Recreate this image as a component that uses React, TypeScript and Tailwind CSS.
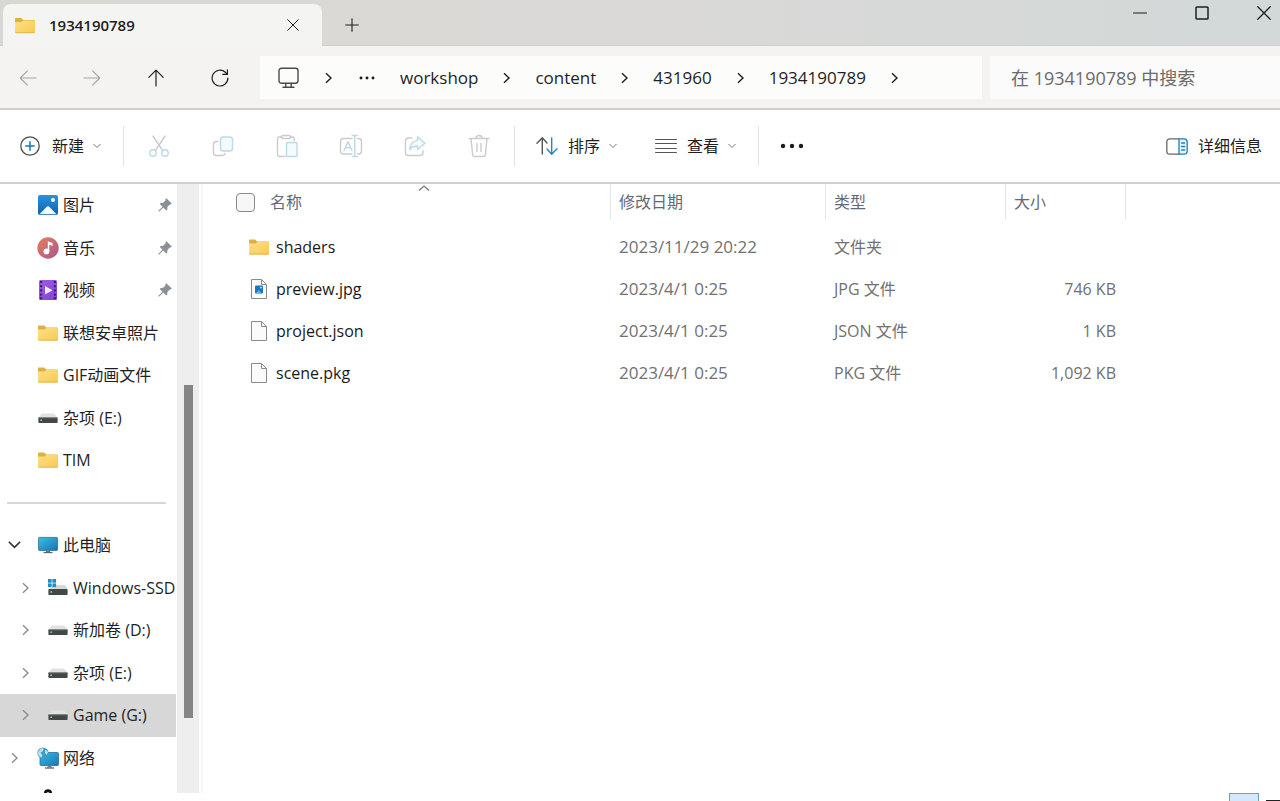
import React from "react";

type IconProps = { className?: string };

const Folder = ({ className = "w-5 h-4" }: IconProps) => (
  <svg viewBox="0 0 20 16" className={`shrink-0 ${className}`}>
    <defs>
      <linearGradient id="folderFront" x1="0" y1="0" x2="1" y2="1">
        <stop offset="0" stopColor="#fde08a" />
        <stop offset="1" stopColor="#f8c94f" />
      </linearGradient>
    </defs>
    <path d="M0 1.6Q0 .5 1 .5H6.2L8.2 2.4H19Q20 2.4 20 3.4V6H0Z" fill="#dfb040" />
    <path d="M0 4.4H6.6L8.4 3H19.2Q20 3 20 3.8V14.6Q20 15.5 19 15.5H1Q0 15.5 0 14.6Z" fill="url(#folderFront)" />
    <path d="M.4 15.2H19.6" stroke="#dca83a" strokeWidth=".7" />
  </svg>
);

const Pictures = () => (
  <svg viewBox="0 0 20 20" className="w-5 h-5 shrink-0">
    <defs>
      <linearGradient id="pic" x1="0" y1="0" x2="0" y2="1">
        <stop offset="0" stopColor="#2b93dc" />
        <stop offset="1" stopColor="#0d62b5" />
      </linearGradient>
    </defs>
    <rect x="0" y="0" width="20" height="20" rx="2" fill="url(#pic)" />
    <path d="M1.5 19.3L9 11.6Q10 10.7 11 11.6L18.5 19.3Z" fill="#f4fbff" />
    <circle cx="15" cy="5" r="2" fill="#fff" />
  </svg>
);

const Music = () => (
  <svg viewBox="0 0 22 22" className="-mx-px w-[22px] h-[22px] shrink-0">
    <defs>
      <linearGradient id="mus" x1="0" y1="0" x2="1" y2="1">
        <stop offset="0" stopColor="#e5805c" />
        <stop offset="1" stopColor="#a9568f" />
      </linearGradient>
    </defs>
    <circle cx="11" cy="11" r="10.7" fill="url(#mus)" />
    <circle cx="9.4" cy="14.4" r="2.9" fill="#fff" />
    <path d="M10.8 14.4V4.2L15.6 6V9L12.3 7.8V14.4Z" fill="#fff" />
  </svg>
);

const Video = () => (
  <svg viewBox="0 0 20 22" className="w-5 h-[22px] shrink-0">
    <defs>
      <linearGradient id="vid" x1="0" y1="0" x2="1" y2="1">
        <stop offset="0" stopColor="#a45be6" />
        <stop offset="1" stopColor="#7a45d0" />
      </linearGradient>
    </defs>
    <rect x="1" y="1" width="18" height="20" rx="1.5" fill="url(#vid)" />
    <g fill="#3c1c76">
      {[2, 6.2, 10.4, 14.6, 18.2].map((y) => (
        <React.Fragment key={y}>
          <rect x="2" y={y} width="2.2" height="2" />
          <rect x="15.8" y={y} width="2.2" height="2" />
        </React.Fragment>
      ))}
    </g>
    <path d="M7 7L14.5 11.2L7 15.4Z" fill="#f3e9ff" />
  </svg>
);

const Drive = () => (
  <svg viewBox="0 0 20 14" className="w-5 h-[14px] shrink-0">
    <path d="M4 2.4H16L19.6 6.6H.4Z" fill="#e0e1e1" />
    <rect x=".4" y="6.4" width="19.2" height="5.6" rx=".8" fill="#434745" />
    <path d="M.4 6.8H19.6" stroke="#777a79" strokeWidth=".8" />
    <circle cx="3.2" cy="9.2" r=".9" fill="#7fd6a4" />
  </svg>
);

const SystemDrive = () => (
  <svg viewBox="0 0 20 18" className="w-5 h-[18px] shrink-0">
    <path d="M8 6H17L19.6 10H1Z" fill="#d6d8d9" />
    <rect x=".4" y="10" width="19.2" height="6" rx=".8" fill="#434745" />
    <circle cx="3.2" cy="13" r=".9" fill="#7fd6a4" />
    <g fill="#1e8fc4">
      <rect x="0" y="0" width="3.7" height="3.7" />
      <rect x="4.4" y="0" width="3.7" height="3.7" />
      <rect x="0" y="4.4" width="3.7" height="3.7" />
      <rect x="4.4" y="4.4" width="3.7" height="3.7" />
    </g>
  </svg>
);

const Computer = () => (
  <svg viewBox="0 0 20 18" className="w-5 h-[18px] shrink-0">
    <defs>
      <linearGradient id="pc" x1="0" y1="0" x2="1" y2="1">
        <stop offset="0" stopColor="#35bfe0" />
        <stop offset="1" stopColor="#1a74b8" />
      </linearGradient>
    </defs>
    <rect x=".4" y="1.4" width="19.2" height="13" rx="1" fill="url(#pc)" stroke="#39677f" strokeWidth=".8" />
    <path d="M8 14.6H12V16H8Z" fill="#6f8088" />
    <path d="M5.5 16.5H14.5" stroke="#56666f" strokeWidth="1.3" />
  </svg>
);

const Network = () => (
  <svg viewBox="0 0 22 22" className="-mx-px w-[22px] h-[22px] shrink-0">
    <rect x="3" y="5.5" width="18.5" height="13" rx="1" fill="url(#pc)" stroke="#2b6d92" strokeWidth=".8" />
    <path d="M10.5 18.5H14.5V20.5H10.5Z" fill="#6f8088" />
    <path d="M8 21H17" stroke="#56666f" strokeWidth="1.3" />
    <circle cx="6" cy="6" r="5.6" fill="#3d9cc9" />
    <path d="M1.6 4Q4 .6 6.6 1.2L6 4L3.6 5.6L5.4 8L4.6 10.6Q1 9 1 6Z" fill="#b9e3ee" />
    <path d="M8.6 2.4L11 5L9.4 8L8 5.4Z" fill="#c9ebf2" />
  </svg>
);

const Pin = () => (
  <svg viewBox="0 0 14 14" className="w-[14px] h-[14px] shrink-0" fill="#8b9096">
    <path d="M8.3 .2L13.8 5.5L12.8 6.6L11.8 6.4L9.4 9L9.3 11.5L8.2 12.4L5.3 9.5L.9 13.7L.2 13L4.5 8.7L1.8 6L2.7 5L5.2 4.8L7.6 2.3L7.3 1.2Z" />
  </svg>
);

const Chevron = ({ className = "" }: IconProps) => (
  <svg viewBox="0 0 7 12" className={`w-[7px] h-3 shrink-0 ${className}`} fill="none" stroke="currentColor" strokeWidth="1.4">
    <path d="M1 1.2L6 6L1 10.8" />
  </svg>
);

const Down = ({ className = "w-2 h-[6px] text-[#777]" }: IconProps) => (
  <svg viewBox="0 0 8 6" className={`shrink-0 ${className}`} fill="none" stroke="currentColor" strokeWidth="1">
    <path d="M.5 1L4 4.5L7.5 1" />
  </svg>
);

const Dots = ({ className = "" }: IconProps) => (
  <svg viewBox="0 0 24 6" className={`shrink-0 ${className}`} fill="#1b1b1b">
    <circle cx="3" cy="3" r="2.2" />
    <circle cx="12" cy="3" r="2.2" />
    <circle cx="21" cy="3" r="2.2" />
  </svg>
);

const FileIcon = ({ picture = false }: { picture?: boolean }) => (
  <svg viewBox="0 0 20 22" className="w-5 h-[22px] shrink-0">
    <path d="M2.5 1.5H12.5L17.5 6.5V20.5H2.5Z" fill="#fbfbfc" stroke="#8a8a8c" />
    <path d="M12.5 1.5V6.5H17.5" fill="none" stroke="#8a8a8c" />
    {picture && (
      <>
        <rect x="6" y="7.5" width="8" height="8" rx="1" fill="#1778c6" />
        <path d="M7 15.2L9.8 12L12.6 15.2Z" fill="#62b2e8" />
        <circle cx="12" cy="9.6" r=".9" fill="#d6effc" />
      </>
    )}
  </svg>
);

const Line = ({ children, className, width = 1.3, box = "0 0 24 24" }: { children: React.ReactNode; className: string; width?: number; box?: string }) => (
  <svg viewBox={box} className={`shrink-0 ${className}`} fill="none" stroke="currentColor" strokeWidth={width} strokeLinecap="round" strokeLinejoin="round">
    {children}
  </svg>
);

const GREY = "#cdcacd";
const BLUE = "#bcd9e6";

const editTools: { label: string; art: React.ReactNode }[] = [
  {
    label: "剪切",
    art: (
      <>
        <path d="M6 2L15.3 16.2M18 2L8.7 16.2" stroke={GREY} />
        <circle cx="6" cy="19" r="3.2" stroke={BLUE} />
        <circle cx="18" cy="19" r="3.2" stroke={BLUE} />
      </>
    ),
  },
  {
    label: "复制",
    art: (
      <>
        <path d="M7 7.5H5.5Q2.5 7.5 2.5 10.5V18.5Q2.5 21.5 5.5 21.5H11Q13.5 21.5 13.8 19.5" stroke={GREY} />
        <rect x="9.5" y="3" width="12" height="14" rx="2.8" fill="#f3fbfe" stroke={BLUE} />
      </>
    ),
  },
  {
    label: "粘贴",
    art: (
      <>
        <path d="M10 22.5H4.2Q2.5 22.5 2.5 20.8V4.5Q2.5 3 4.2 3H6.5M15.5 3H17.5Q19.2 3 19.2 4.5V7" stroke={GREY} />
        <rect x="6.5" y="1.5" width="9" height="3" rx="1.5" stroke={GREY} />
        <rect x="11.5" y="8.5" width="10.5" height="14" rx="1" fill="#f3fbfe" stroke={BLUE} />
      </>
    ),
  },
  {
    label: "重命名",
    art: (
      <>
        <path d="M13 4.5H4.5Q1.5 4.5 1.5 7.5V17Q1.5 20 4.5 20H13M18.5 4.5H19.5Q22.5 4.5 22.5 7.5V17Q22.5 20 19.5 20H18.5" stroke={GREY} />
        <path d="M5 16.8L9 7.6L13 16.8M6.4 13.8H11.6" stroke={BLUE} />
        <path d="M13.2 1.5H18.4M15.8 1.5V22.5M13.2 22.5H18.4" stroke={BLUE} />
      </>
    ),
  },
  {
    label: "共享",
    art: (
      <>
        <path d="M9 4H5.5Q2.5 4 2.5 7V18.5Q2.5 21.5 5.5 21.5H17Q20 21.5 20 18.5V17" stroke={GREY} />
        <path d="M14.5 2.8L22 9.2L14.5 15.5V12Q9.5 12 6.8 15.5Q7.5 7.2 14.5 6.4Z" fill="#f3fbfe" stroke={BLUE} />
      </>
    ),
  },
  {
    label: "删除",
    art: (
      <>
        <path d="M2.2 4.5H21.8M9 4.2Q9 1.5 12 1.5T15 4.2M4 4.5L5.6 20.5Q5.8 22.5 7.8 22.5H16.2Q18.2 22.5 18.4 20.5L20 4.5" stroke={GREY} />
        <path d="M10 9.5V17.5M14 9.5V17.5" stroke={GREY} />
      </>
    ),
  },
];

type NavItem = { label: string; icon: React.ReactNode; pinned?: boolean; chevron?: "right" | "down"; nested?: boolean; selected?: boolean };

const quick: NavItem[] = [
  { label: "图片", icon: <Pictures />, pinned: true },
  { label: "音乐", icon: <Music />, pinned: true },
  { label: "视频", icon: <Video />, pinned: true },
  { label: "联想安卓照片", icon: <Folder /> },
  { label: "GIF动画文件", icon: <Folder /> },
  { label: "杂项 (E:)", icon: <Drive /> },
  { label: "TIM", icon: <Folder /> },
];

const places: NavItem[] = [
  { label: "此电脑", icon: <Computer />, chevron: "down" },
  { label: "Windows-SSD", icon: <SystemDrive />, chevron: "right", nested: true },
  { label: "新加卷 (D:)", icon: <Drive />, chevron: "right", nested: true },
  { label: "杂项 (E:)", icon: <Drive />, chevron: "right", nested: true },
  { label: "Game (G:)", icon: <Drive />, chevron: "right", nested: true, selected: true },
  { label: "网络", icon: <Network />, chevron: "right" },
];

const NavRow = ({ item }: { item: NavItem }) => (
  <a href="#" className={`mr-px flex min-h-0 flex-1 items-center overflow-hidden ${item.nested ? "pl-[18px]" : "pl-2"} ${item.selected ? "bg-[#d7d7d7]" : ""}`}>
    <span className={`flex shrink-0 items-center ${item.nested ? "w-[30px] pl-1" : "w-[30px]"}`}>
      {item.chevron === "right" && <Chevron className={item.nested ? "text-[#8c8c8c]" : "ml-[3px] text-[#8c8c8c]"} />}
      {item.chevron === "down" && <Down className="h-[10px] w-[13px] text-[#333]" />}
    </span>
    {item.icon}
    <span className="ml-[5px] flex-1 whitespace-nowrap">{item.label}</span>
    {item.pinned && (
      <span className="mr-1">
        <Pin />
      </span>
    )}
  </a>
);

const files = [
  { name: "shaders", date: "2023/11/29 20:22", type: "文件夹", size: "", icon: <Folder /> },
  { name: "preview.jpg", date: "2023/4/1 0:25", type: "JPG 文件", size: "746 KB", icon: <FileIcon picture /> },
  { name: "project.json", date: "2023/4/1 0:25", type: "JSON 文件", size: "1 KB", icon: <FileIcon /> },
  { name: "scene.pkg", date: "2023/4/1 0:25", type: "PKG 文件", size: "1,092 KB", icon: <FileIcon /> },
];

const Divider = () => <span className="h-10 w-px shrink-0 bg-[#e3e3e3]" />;

export default function App() {
  const crumbs = ["workshop", "content", "431960", "1934190789"];
  return (
    <div className="flex h-screen flex-col overflow-hidden bg-white text-base leading-6 text-[#1f1f1f] [font-family:'Open_Sans','Noto_Sans_CJK_SC',sans-serif]">
      <header className="flex h-[46px] shrink-0 items-start border-b border-[#cfcfce] bg-linear-to-r from-[#d8d8d3] via-[#dad9d7] to-[#d2d9d8]">
        <div className="mt-1 -mb-px ml-[3px] flex h-[42px] w-[319px] shrink-0 items-center rounded-t-lg bg-[#f4f4f2] pr-[21px] pl-3">
          <Folder className="h-[17px] w-5" />
          <span className="ml-[14px] flex-1 text-[15px] font-semibold text-[#222]">1934190789</span>
          <button aria-label="关闭标签页" className="flex h-6 w-4 items-center justify-center">
            <Line className="h-3 w-3" box="0 0 12 12" width={1}><path d="M.7 .7L11.3 11.3M11.3 .7L.7 11.3" /></Line>
          </button>
        </div>
        <button aria-label="新标签页" className="mt-[13px] ml-[22px] flex h-6 w-4 items-center justify-center">
          <Line className="h-[14px] w-[14px]" box="0 0 14 14" width={1.1}><path d="M7 .7V13.3M.7 7H13.3" /></Line>
        </button>
        <div className="mr-[9px] ml-auto flex h-[26px] items-center gap-12">
          <button aria-label="最小化" className="flex w-[14px] justify-center">
            <Line className="h-[14px] w-[14px]" box="0 0 14 14" width={1.1}><path d="M.5 7H13.5" /></Line>
          </button>
          <button aria-label="最大化" className="flex w-[14px] justify-center">
            <Line className="h-[14px] w-[14px]" box="0 0 14 14" width={1.5}><rect x="1" y="1" width="12" height="12" rx=".8" /></Line>
          </button>
          <button aria-label="关闭" className="flex w-[14px] justify-center">
            <Line className="h-[14px] w-[14px]" box="0 0 14 14" width={1.3}><path d="M.8 .8L13.2 13.2M13.2 .8L.8 13.2" /></Line>
          </button>
        </div>
      </header>

      <div className="flex h-16 shrink-0 items-center border-b-2 border-[#cecece] bg-[#f4f3f2] pt-px">
        <div className="flex gap-4 pl-1">
          <button aria-label="后退" className="flex h-9 w-12 items-center justify-center text-[#a3a3a3]">
            <Line className="h-[18px] w-[18px]" box="0 0 18 18" width={1.1}><path d="M17 9H1.2M8.4 1.8L1.2 9L8.4 16.2" /></Line>
          </button>
          <button aria-label="前进" className="flex h-9 w-12 items-center justify-center text-[#a3a3a3]">
            <Line className="h-[18px] w-[18px]" box="0 0 18 18" width={1.1}><path d="M1 9H16.8M9.6 1.8L16.8 9L9.6 16.2" /></Line>
          </button>
          <button aria-label="向上" className="flex h-9 w-12 items-center justify-center">
            <Line className="h-[18px] w-[18px]" box="0 0 18 18" width={1.2}><path d="M9 17V1.2M1.8 8.4L9 1.2L16.2 8.4" /></Line>
          </button>
          <button aria-label="刷新" className="flex h-9 w-12 items-center justify-center">
            <Line className="h-[18px] w-[18px]" box="0 0 18 18" width={1.2}><path d="M16.9 9A7.9 7.9 0 1 1 14.4 3.3L16.2 5.2M16.4 .9V5.4H11.8" /></Line>
          </button>
        </div>
        <div className="ml-4 flex h-[43px] flex-1 items-center bg-[#fcfcfb] pl-[18px] text-[17px]">
          <Line className="h-[22px] w-[21px] text-[#4a4a4a]" box="0 0 21 22" width={1.4}>
            <rect x="1" y="1.2" width="19" height="15" rx="2.4" />
            <path d="M7.8 16.4V20M13.2 16.4V20M5 20.2H16" />
          </Line>
          <Chevron className="ml-[26px]" />
          <button aria-label="更多路径" className="mr-[25px] ml-[27px] flex h-6 items-center">
            <Dots className="h-1 w-4" />
          </button>
          <nav className="flex items-center gap-[25px]">
            {crumbs.map((c) => (
              <React.Fragment key={c}>
                <a href="#">{c}</a>
                <Chevron />
              </React.Fragment>
            ))}
          </nav>
        </div>
        <input
          type="search"
          aria-label="搜索"
          placeholder="在 1934190789 中搜索"
          className="ml-2 h-[43px] w-[290px] shrink-0 bg-[#fbfbfc] pl-[21px] text-[18px] outline-none placeholder:text-[#6b6b6b]"
        />
      </div>

      <div className="flex h-[74px] shrink-0 items-center border-b-2 border-[#d0d0d0]">
        <button className="mr-[22px] ml-5 flex shrink-0 items-center">
          <Line className="h-5 w-5 text-[#4c4c4c]" box="0 0 20 20" width={1.3}>
            <circle cx="10" cy="10" r="9.2" />
            <path d="M10 5.8V14.2M5.8 10H14.2" stroke="#1679b5" strokeWidth="1.5" />
          </Line>
          <span className="mr-[9px] ml-3">新建</span>
          <Down />
        </button>
        <Divider />
        <div className="flex gap-10 px-[23px]">
          {editTools.map((t) => (
            <button key={t.label} aria-label={t.label} disabled className="flex h-10 w-6 items-center">
              <Line className="h-6 w-6" width={1.4}>{t.art}</Line>
            </button>
          ))}
        </div>
        <Divider />
        <button className="ml-[21px] flex shrink-0 items-center">
          <Line className="h-5 w-[22px]" box="0 0 22 20" width={1.4}>
            <path d="M6.3 18V2M1 7.2L6.3 1.8L11 7" stroke="#555" />
            <path d="M15.7 2V18M11 13L15.7 18.2L21 12.8" stroke="#2587bd" />
          </Line>
          <span className="mr-[9px] ml-[10px]">排序</span>
          <Down />
        </button>
        <button className="mr-[22px] ml-[38px] flex shrink-0 items-center">
          <Line className="h-4 w-[22px] text-[#555]" box="0 0 22 16" width={1.2}>
            <path d="M.6 1.5H21.4M.6 5.5H21.4M.6 10.5H21.4M.6 14.5H21.4" />
          </Line>
          <span className="mr-[9px] ml-[10px]">查看</span>
          <Down />
        </button>
        <Divider />
        <button aria-label="更多" className="ml-[21px] flex h-10 items-center">
          <Dots className="h-[6px] w-6" />
        </button>
        <button className="mr-[18px] ml-auto flex shrink-0 items-center gap-[10px]">
          <Line className="h-[17px] w-[22px]" box="0 0 22 17" width={1.3}>
            <path d="M13 16.2H4Q.8 16.2 .8 13V4Q.8 .8 4 .8H13" stroke="#666" />
            <path d="M13 .8H18Q21.2 .8 21.2 4V13Q21.2 16.2 18 16.2H13Z" fill="#e5f5fd" stroke="#1f7fb8" />
            <path d="M15.6 5H18.6M15.6 8.5H18.6M15.6 12H18.6" stroke="#1f7fb8" />
          </Line>
          <span>详细信息</span>
        </button>
      </div>

      <div className="flex min-h-0 flex-1">
        <aside className="flex w-[203px] shrink-0 border-r-2 border-[#f6f6f6]">
          <nav className="flex w-[177px] shrink-0 flex-col overflow-hidden">
            {quick.map((i) => <NavRow key={i.label} item={i} />)}
            <div className="flex min-h-0 flex-1 items-center pr-[11px] pl-[7px]">
              <hr className="h-[2px] w-full border-0 bg-[#d6d6d6]" />
            </div>
            {places.map((i) => <NavRow key={i.label} item={i} />)}
            <div className="flex h-[14px] shrink-0 items-end pl-[43px]">
              <svg viewBox="0 0 10 4" className="h-1 w-[10px]"><path d="M1 4Q1 .3 5 .3T9 4H6.5L5 3L3.5 4Z" fill="#111" /></svg>
            </div>
          </nav>
          <div className="w-[22px] bg-[#eeeeee] pt-[201px] pl-[7px]">
            <div className="h-[333px] w-[9px] bg-[#858585]" />
          </div>
        </aside>

        <main className="min-w-0 flex-1">
          <table className="w-full table-fixed border-collapse text-left text-[#717171]">
            <colgroup>
              <col className="w-[408px]" />
              <col className="w-[215px]" />
              <col className="w-[180px]" />
              <col className="w-[120px]" />
              <col />
            </colgroup>
            <thead className="text-[#626a76]">
              <tr className="h-[42px] align-top">
                <th className="p-0 font-normal">
                  <div className="relative flex h-9 items-center border-r border-[#e6e6e6] pl-[33px]">
                    <input type="checkbox" aria-label="全选" className="h-[19px] w-[19px] appearance-none rounded-[4px] border border-[#8a8a8a] bg-[#f8f7f8]" />
                    <span className="ml-[15px]">名称</span>
                    <svg viewBox="0 0 12 6" className="absolute top-px left-[215px] h-[6px] w-3" fill="none" stroke="#777" strokeWidth="1.1"><path d="M1 5.5L6 1L11 5.5" /></svg>
                  </div>
                </th>
                {["修改日期", "类型", "大小"].map((h) => (
                  <th key={h} className="p-0 font-normal">
                    <div className="flex h-9 items-center border-r border-[#e6e6e6] pl-2">{h}</div>
                  </th>
                ))}
                <td />
              </tr>
            </thead>
            <tbody>
              {files.map((f) => (
                <tr key={f.name} className="h-[42px]">
                  <td className="p-0">
                    <div className="flex items-center pl-[46px] text-[#1a1a1a]">
                      {f.icon}
                      <span className="ml-[7px]">{f.name}</span>
                    </div>
                  </td>
                  <td className="p-0 pl-2 text-[17px]">{f.date}</td>
                  <td className="p-0 pl-2">{f.type}</td>
                  <td className="p-0 pr-[10px] text-right">{f.size}</td>
                  <td />
                </tr>
              ))}
            </tbody>
          </table>
        </main>
      </div>

      <footer className="flex h-2 shrink-0 items-end justify-end">
        <button aria-label="详细信息视图" className="mr-[7px] h-2 w-[30px] border border-b-0 border-[#6ba3b5] bg-[#d3e9f7]" />
        <span className="h-px w-[14px] bg-[#222]" />
      </footer>
    </div>
  );
}
